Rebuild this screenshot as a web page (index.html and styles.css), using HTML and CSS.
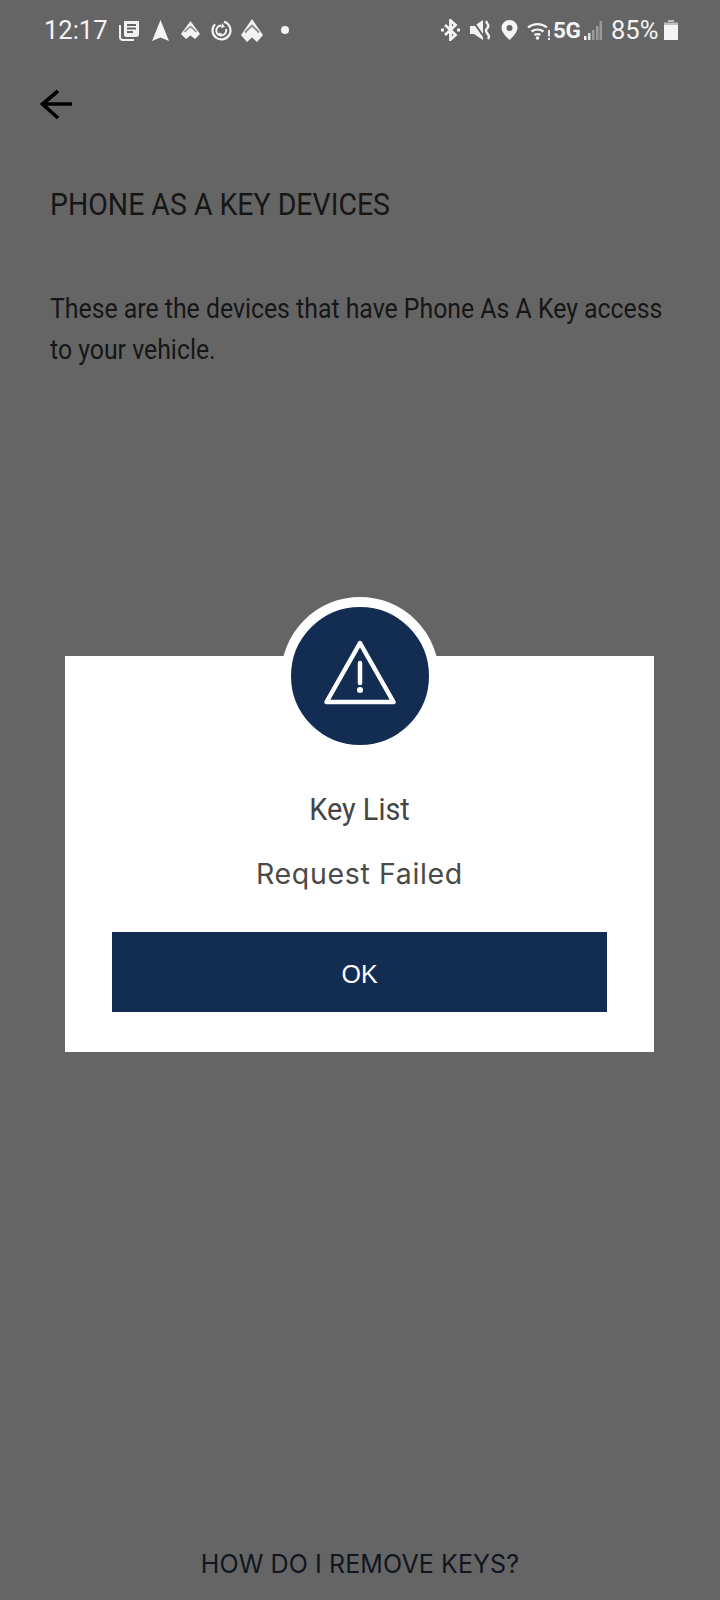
FILE: index.html
```html
<!DOCTYPE html>
<html lang="en">
<head>
  <title>Phone As A Key Devices</title>
  <meta charset="utf-8">
  <meta name="viewport" content="width=device-width, user-scalable=no, minimum-scale=1.0, maximum-scale=1.0">
  <link rel="stylesheet" href="styles.css">
</head>
<body>
<div class="page">
  <div class="status">
    <div class="status-left">
      <span class="time">12:17</span>
      <svg class="ic-news" width="21" height="21" viewBox="0 0 21 21"><path d="M5 1h15v13a3 3 0 0 1-3 3H7.500A2.500 2.500 0 0 1 5 14.500z" fill="#f2f2f2"/><path d="M1 5v12a3 3 0 0 0 3 3h11" fill="none" stroke="#f2f2f2" stroke-width="2"/><path d="M8 5h9M8 8.500h9M8 12h6" stroke="#656565" stroke-width="1.800"/></svg>
      <svg class="ic-nav" width="17" height="21" viewBox="0 0 17 21"><path d="M8.500 0L17 21L8.500 17.500L0 21z" fill="#f4f4f4"/></svg>
      <svg class="ic-auto" width="19" height="18" viewBox="0 0 19 18"><path d="M9.500 0L19 13L14 18L9.500 14.500L5 18L0 13z" fill="#f2f2f2"/><path d="M3.500 11L9.500 5.500L15.500 11" fill="none" stroke="#8a8a8a" stroke-width="1.600"/></svg>
      <svg class="ic-sync" width="21" height="21" viewBox="0 0 21 21"><path d="M13 1.800A9 9 0 1 1 4 4.200" fill="none" stroke="#f2f2f2" stroke-width="2.200"/><path d="M15 9a5 5 0 1 1-5-3.500M8 13.500l3 1.500" fill="none" stroke="#f2f2f2" stroke-width="2"/><path d="M11 3l-1 5l4-1z" fill="#f2f2f2"/></svg>
      <svg class="ic-auto2" width="22" height="23" viewBox="0 0 22 23"><path d="M11 0L22 16L16 23L11 18.500L6 23L0 16z" fill="#f2f2f2"/><path d="M4 13.500L11 6.500L18 13.500" fill="none" stroke="#8a8a8a" stroke-width="1.800"/></svg>
      <span class="dot"></span>
    </div>
    <div class="status-right">
      <svg class="ic-bt" width="19" height="22" viewBox="0 0 19 22"><path d="M9.500 1.500l5 4.500l-5 5l5 5l-5 4.500zM9.500 11L4 6M9.500 11L4 16" fill="none" stroke="#f4f4f4" stroke-width="2.800"/><path d="M0 9.500h3v3H0zM16 9.500h3v3h-3z" fill="#f4f4f4"/></svg>
      <svg class="ic-mute" width="21" height="20" viewBox="0 0 21 20"><path d="M0 6h4l9-6v20l-9-6H0z" fill="#f4f4f4"/><path d="M2 0l12 17" stroke="#656565" stroke-width="2"/><path d="M17 1c-2 3 3 3 1 6s-3 3-1 6s3 3 1 6" fill="none" stroke="#f4f4f4" stroke-width="2.400"/></svg>
      <svg class="ic-pin" width="17" height="20" viewBox="0 0 17 20"><path fill-rule="evenodd" d="M8.500 0a8 8 0 0 1 8 8c0 5-8 12-8 12S.500 13 .500 8a8 8 0 0 1 8-8zm0 5a3 3 0 1 0 0 6a3 3 0 0 0 0-6z" fill="#f4f4f4"/></svg>
      <svg class="ic-wifi" width="24" height="19" viewBox="0 0 24 19"><path d="M1 6.500a15 15 0 0 1 19 0M4.500 10.500a10 10 0 0 1 12 0M7.500 14a5.500 5.500 0 0 1 6 0" fill="none" stroke="#f4f4f4" stroke-width="2.200"/><circle cx="10.500" cy="17" r="1.800" fill="#f4f4f4"/><path d="M22 9v6.500M22 17v2" stroke="#f4f4f4" stroke-width="1.800"/></svg>
      <span class="net">5G</span>
      <svg class="ic-signal" width="18" height="19" viewBox="0 0 18 19"><path d="M0 15h2.500v4H0z" fill="#f4f4f4"/><path d="M4 12h2.500v7H4z" fill="#e0e0e0"/><path d="M8 9h2.500v10H8zM12 5h2.500v14H12zM15.500 0H18v19h-2.500z" fill="#9a9a9a"/></svg>
      <span class="pct">85%</span>
      <svg class="ic-batt" width="14" height="20" viewBox="0 0 14 20"><path d="M4 0h6v2H4z" fill="#bdbdbd"/><path d="M0 2.500h14V20H0z" fill="#bdbdbd"/><path d="M0 5h14v15H0z" fill="#f4f4f4"/></svg>
    </div>
  </div>

  <svg class="back" width="34" height="32" viewBox="0 0 34 32"><path d="M33 15H4M19 2L3.500 15L19 29" fill="none" stroke="#000" stroke-width="3.600"/></svg>

  <div class="title">PHONE AS A KEY DEVICES</div>
  <div class="desc">These are the devices that have Phone As A Key access<br>to your vehicle.</div>

  <div class="remove">HOW DO I REMOVE KEYS?</div>
</div>

<div class="overlay">
  <div class="dialog">
    <div class="badge">
      <svg width="74" height="66" viewBox="0 0 74 66"><path d="M37 3L70.500 62H3.500z" fill="none" stroke="#fff" stroke-width="4.500" stroke-linejoin="round"/><path d="M37 23v20" stroke="#fff" stroke-width="4.500" stroke-linecap="round"/><circle cx="37" cy="50" r="3" fill="#fff"/></svg>
    </div>
    <div class="dialog-title">Key List</div>
    <div class="dialog-msg">Request Failed</div>
    <div class="ok">OK</div>
  </div>
</div>
</body>
</html>
```

FILE: styles.css
```css
html, body {
  margin: 0;
  height: 1600px;
  overflow: hidden;
}

body {
  font-family: Roboto, sans-serif;
  background-color: #656565;
  color: #161616;
}

.page {
  display: flex;
  flex-direction: column;
  height: 1600px;
}

.status {
  display: flex;
  justify-content: space-between;
  align-items: center;
  height: 38px;
  padding: 11px 42px 0 44px;
  color: #f4f4f4;
}

.status-left, .status-right {
  display: flex;
  align-items: center;
}

.time {
  font-size: 25.500px;
  width: 63px;
}

.ic-news { margin-left: 12px; }
.ic-nav { margin-left: 12px; }
.ic-auto { margin-left: 12px; }
.ic-sync { margin-left: 11px; }
.ic-auto2 { margin-left: 9px; }

.dot {
  width: 8px;
  height: 8px;
  margin-left: 18px;
  border-radius: 50%;
  background-color: #f4f4f4;
}

.ic-mute { margin-left: 10px; }
.ic-pin { margin-left: 10px; }
.ic-wifi { margin-left: 9px; }

.net {
  margin-left: 2px;
  width: 27px;
  font-size: 22.500px;
  font-weight: 700;
  letter-spacing: -0.500px;
}

.ic-signal { margin-left: 4px; }

.pct {
  margin-left: 9px;
  width: 48px;
  font-size: 25.500px;
}

.ic-batt { margin-left: 5px; }

.back {
  margin: 40px 0 0 39px;
  flex: none;
}

/* no condensed family is installed, so the text is squeezed */
.title, .desc {
  transform-origin: left top;
  white-space: nowrap;
}

.title {
  margin: 65px 0 0 50px;
  font-size: 31px;
  line-height: 38px;
  transform: scaleX(0.918);
}

.desc {
  margin: 64px 0 0 50px;
  font-size: 28.500px;
  line-height: 41px;
  transform: scaleX(0.871);
}

.remove {
  margin-top: auto;
  margin-bottom: 21px;
  text-align: center;
  font-family: Inter, sans-serif;
  font-size: 25px;
  letter-spacing: 0.100px;
  line-height: 30px;
  color: #10161f;
}

.overlay {
  position: absolute;
  top: 656px;
  left: 65px;
  width: 589px;
}

.dialog {
  position: relative;
  box-sizing: border-box;
  height: 396px;
  padding: 131px 47px 0;
  background-color: #fff;
  text-align: center;
}

.badge {
  position: absolute;
  top: -59px;
  left: 216px;
  box-sizing: border-box;
  display: flex;
  align-items: center;
  justify-content: center;
  width: 158px;
  height: 158px;
  border: 10px solid #fff;
  border-radius: 50%;
  background-color: #122c52;
}

.badge svg {
  margin-bottom: 7px;
}

.dialog-title {
  font-size: 32px;
  line-height: 44px;
  color: #454545;
  transform: scaleX(0.9);
}

.dialog-msg {
  margin-top: 23px;
  font-family: Inter, sans-serif;
  font-size: 28.500px;
  letter-spacing: 0.650px;
  line-height: 40px;
  color: #4a4a4a;
}

.ok {
  margin-top: 38px;
  height: 80px;
  line-height: 84px;
  background-color: #122c52;
  color: #fff;
  font-family: "Liberation Sans", sans-serif;
  font-size: 25px;
}
```
